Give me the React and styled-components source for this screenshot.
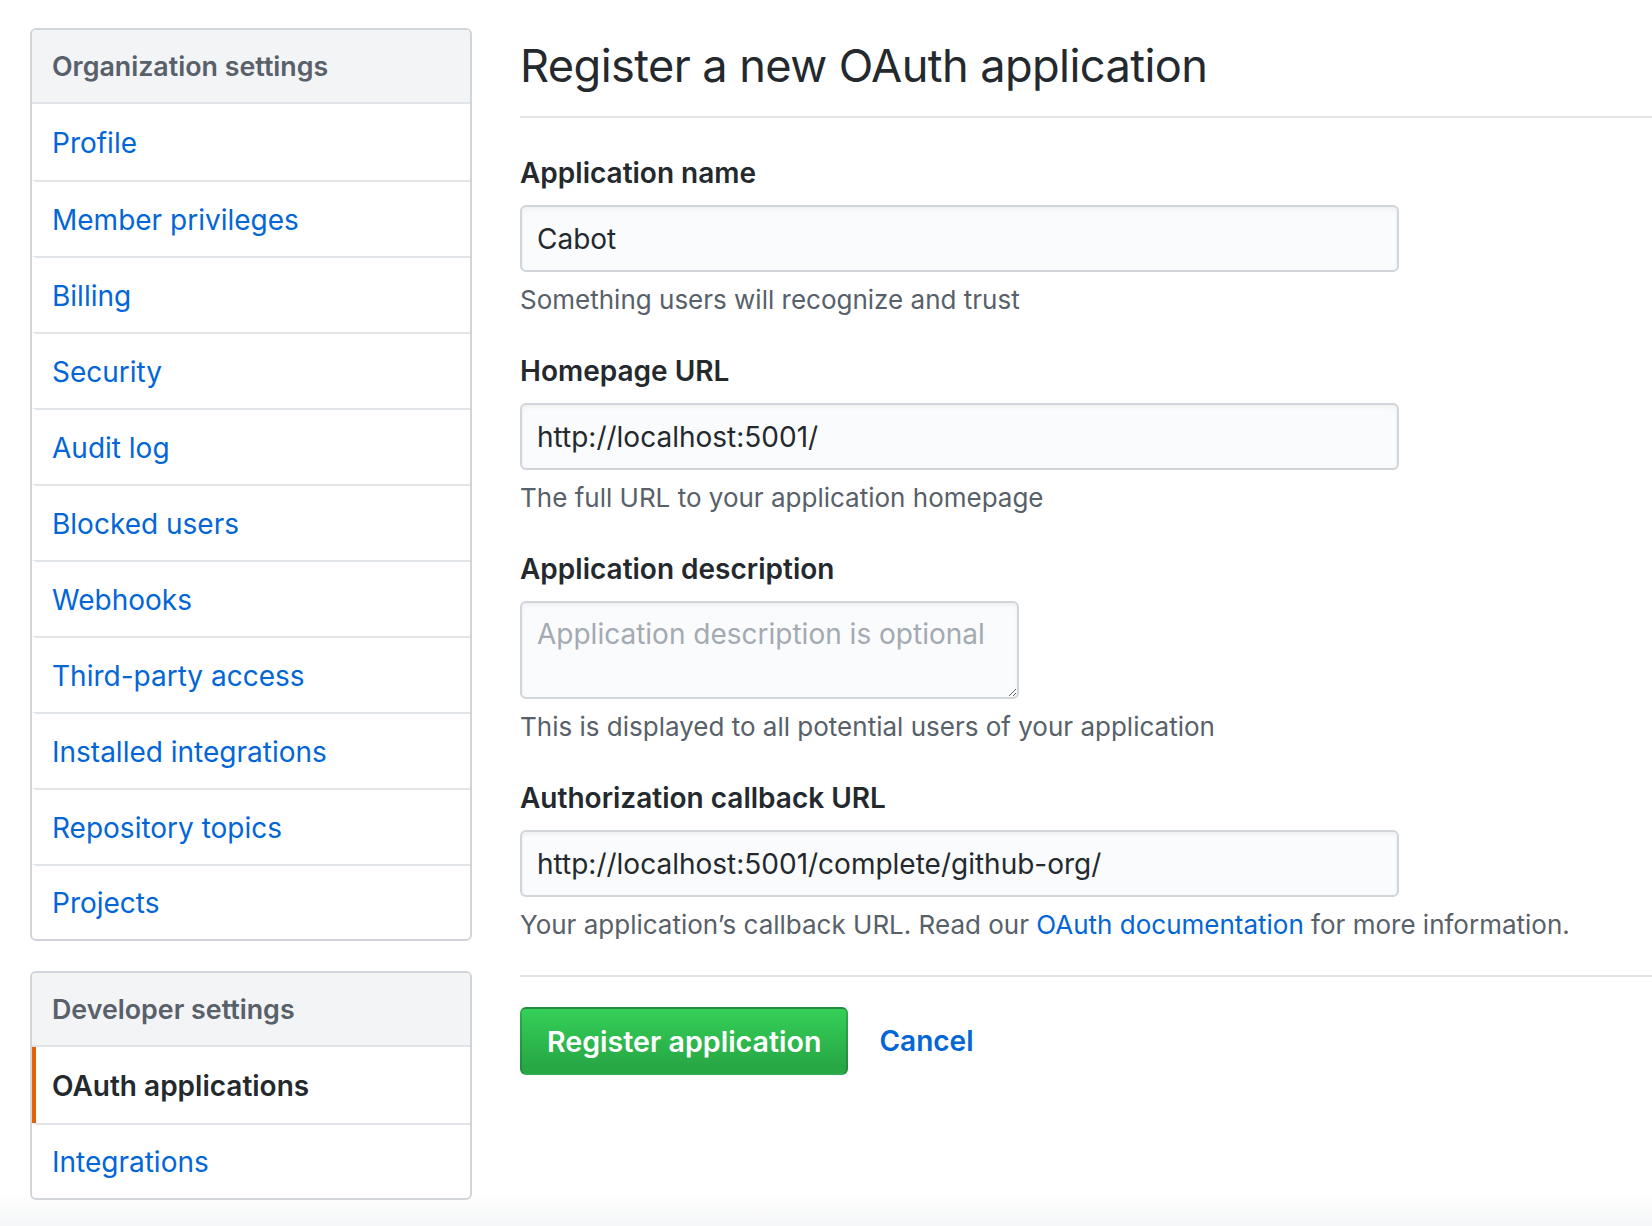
import styled, { createGlobalStyle } from "styled-components";

const GlobalStyle = createGlobalStyle`
  html, body {
    margin: 0;
    padding: 0;
  }
  body {
    min-height: 100vh;
    font-family: Inter, "Noto Sans", "Liberation Sans", sans-serif;
    color: #24292e;
    background: linear-gradient(#ffffff calc(100% - 34px), #f6f7f8 100%);
  }
  * {
    box-sizing: border-box;
  }
`;

const Page = styled.div`
  display: flex;
  align-items: flex-start;
  gap: 48px;
  padding: 28px 0 0 30px;
`;

const Sidebar = styled.nav`
  width: 442px;
  flex-shrink: 0;
  display: flex;
  flex-direction: column;
  gap: 30px;
`;

const Menu = styled.div`
  border: 2px solid #d1d5da;
  border-radius: 6px;
  overflow: hidden;
  background: #fff;
`;

const MenuHeading = styled.div`
  height: 74px;
  display: flex;
  align-items: center;
  padding: 0 20px;
  background: #f3f4f6;
  border-bottom: 2px solid #e1e4e8;
  font-size: 26.8px;
  font-weight: 600;
  color: #586069;
`;

const MenuItem = styled.a`
  display: flex;
  align-items: center;
  height: 76px;
  padding: 1px 20px 0 16px;
  font-size: 28px;
  text-decoration: none;
  color: ${(p) => (p.$selected ? "#24292e" : "#0366d6")};
  font-weight: ${(p) => (p.$selected ? 600 : 400)};
  border-left: 4px solid ${(p) => (p.$selected ? "#e36209" : "transparent")};
  & + & {
    border-top: 2px solid #e1e4e8;
  }
  &:last-child {
    height: 75px;
  }
`;

const Main = styled.main`
  flex: 1;
  min-width: 0;
`;

const Subhead = styled.div`
  border-bottom: 2px solid #e1e4e8;
  padding: 6px 0 18px;
  margin-bottom: 34px;
`;

const Heading = styled.h1`
  margin: 0;
  font-size: 45.2px;
  line-height: 64px;
  font-weight: 400;
  letter-spacing: -0.6px;
  color: #24292e;
`;

const FormGroup = styled.div`
  margin-bottom: 32px;
`;

const Label = styled.label`
  display: block;
  font-size: 28px;
  line-height: 42px;
  font-weight: 600;
  margin-bottom: 11px;
  color: #24292e;
`;

const TextInput = styled.input`
  display: block;
  width: 879px;
  height: 67px;
  padding: 0 15px;
  font-family: inherit;
  font-size: 28px;
  color: #24292e;
  background: #fafbfc;
  border: 2px solid #d1d5da;
  border-radius: 6px;
  box-shadow: inset 0 2px 4px rgba(27, 31, 35, 0.06);
  outline: none;
`;

const TextArea = styled.textarea`
  display: block;
  width: 499px;
  height: 98px;
  padding: 13px 15px;
  font-family: inherit;
  font-size: 28px;
  line-height: 36px;
  color: #24292e;
  background: #fafbfc;
  border: 2px solid #d1d5da;
  border-radius: 6px;
  box-shadow: inset 0 2px 4px rgba(27, 31, 35, 0.06);
  outline: none;
  resize: both;
  &::placeholder {
    color: #a3aab1;
  }
`;

const Note = styled.p`
  margin: 10px 0 0;
  font-size: 26px;
  line-height: 36px;
  color: #586069;
`;

const Link = styled.a`
  color: #0366d6;
  text-decoration: none;
`;

const Divider = styled.hr`
  border: 0;
  border-top: 2px solid #e1e4e8;
  margin: 0 0 30px;
`;

const Actions = styled.div`
  display: flex;
  align-items: center;
  gap: 31px;
`;

const PrimaryButton = styled.button`
  height: 68px;
  padding: 0 25px;
  font-family: inherit;
  font-size: 28.6px;
  font-weight: 600;
  color: #fff;
  background: linear-gradient(#34d058, #28a745 90%);
  border: 2px solid rgba(27, 31, 35, 0.2);
  border-radius: 6px;
  cursor: pointer;
`;

const CancelLink = styled.a`
  font-size: 28px;
  font-weight: 600;
  color: #0366d6;
  text-decoration: none;
`;

const orgItems = [
  "Profile",
  "Member privileges",
  "Billing",
  "Security",
  "Audit log",
  "Blocked users",
  "Webhooks",
  "Third-party access",
  "Installed integrations",
  "Repository topics",
  "Projects",
];

const App = () => (
  <>
    <GlobalStyle />
    <Page>
      <Sidebar>
        <Menu>
          <MenuHeading>Organization settings</MenuHeading>
          {orgItems.map((item) => (
            <MenuItem key={item} href="#">
              {item}
            </MenuItem>
          ))}
        </Menu>
        <Menu>
          <MenuHeading>Developer settings</MenuHeading>
          <MenuItem href="#" $selected>
            OAuth applications
          </MenuItem>
          <MenuItem href="#">Integrations</MenuItem>
        </Menu>
      </Sidebar>

      <Main>
        <Subhead>
          <Heading>Register a new OAuth application</Heading>
        </Subhead>

        <FormGroup>
          <Label>Application name</Label>
          <TextInput defaultValue="Cabot" />
          <Note>Something users will recognize and trust</Note>
        </FormGroup>

        <FormGroup>
          <Label>Homepage URL</Label>
          <TextInput defaultValue="http://localhost:5001/" />
          <Note>The full URL to your application homepage</Note>
        </FormGroup>

        <FormGroup>
          <Label>Application description</Label>
          <TextArea placeholder="Application description is optional" />
          <Note>This is displayed to all potential users of your application</Note>
        </FormGroup>

        <FormGroup>
          <Label>Authorization callback URL</Label>
          <TextInput defaultValue="http://localhost:5001/complete/github-org/" />
          <Note>
            Your application’s callback URL. Read our{" "}
            <Link href="#">OAuth documentation</Link> for more information.
          </Note>
        </FormGroup>

        <Divider />

        <Actions>
          <PrimaryButton>Register application</PrimaryButton>
          <CancelLink href="#">Cancel</CancelLink>
        </Actions>
      </Main>
    </Page>
  </>
);

export default App;
